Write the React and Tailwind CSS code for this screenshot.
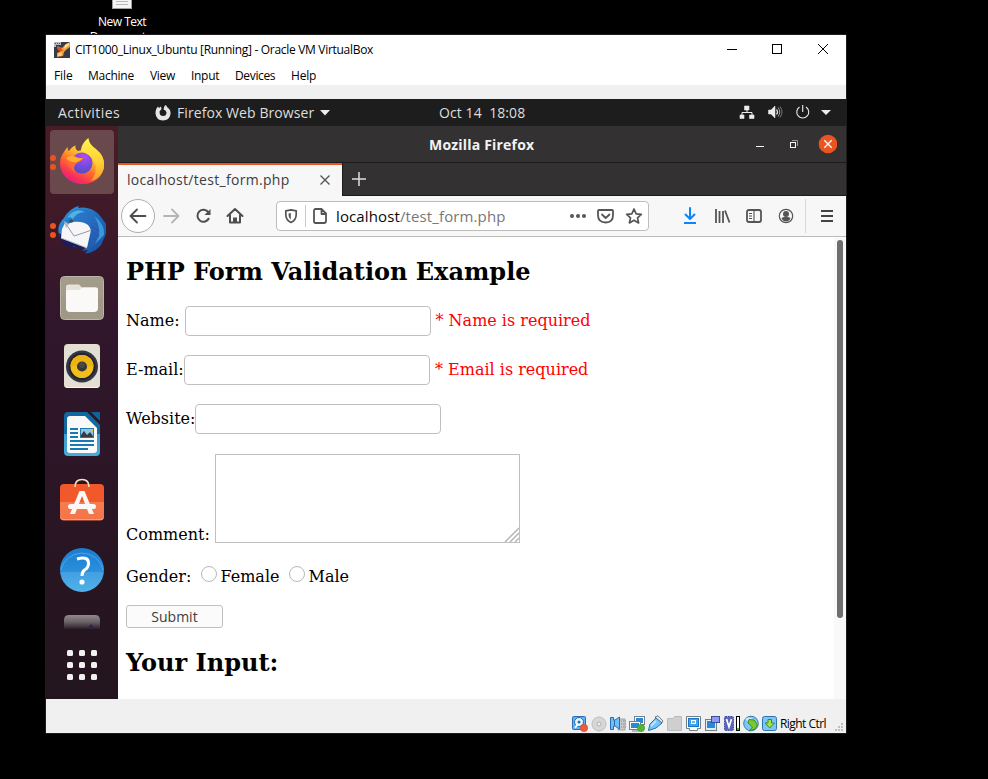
import React from "react";

const ui = "font-['Open_Sans','Noto_Sans',sans-serif]";

function FirefoxIcon() {
  return (
    <svg width="48" height="48" viewBox="0 0 48 48">
      <defs>
        <linearGradient id="ffBody" x1="0.85" y1="0.05" x2="0.25" y2="0.95">
          <stop offset="0" stopColor="#fff14a" />
          <stop offset="0.35" stopColor="#ffb52c" />
          <stop offset="0.6" stopColor="#ff6a2c" />
          <stop offset="0.85" stopColor="#f8305a" />
          <stop offset="1" stopColor="#e51f85" />
        </linearGradient>
        <radialGradient id="ffGlobe" cx="0.6" cy="0.2" r="0.9">
          <stop offset="0" stopColor="#b04df5" />
          <stop offset="0.6" stopColor="#6e4bd8" />
          <stop offset="1" stopColor="#4a4fb8" />
        </radialGradient>
        <linearGradient id="ffEar" x1="0.5" y1="0" x2="0.6" y2="1">
          <stop offset="0" stopColor="#fff34d" />
          <stop offset="0.6" stopColor="#ffce34" />
          <stop offset="1" stopColor="#ff9a2a" />
        </linearGradient>
      </defs>
      <path d="M6 14C7 12 8.500 10 9.500 9C9.500 11 10 12 11 13C13 10 15 8.500 17.500 7.500C17 10 18 12 20 13L30 10L41 14C45 18 46.500 23 46 28C45 39 36 46 24.500 46C12 46 2 37 2 25C2 21 3.500 17 6 14Z" fill="url(#ffBody)" />
      <circle cx="24" cy="25" r="10.500" fill="url(#ffGlobe)" />
      <path d="M23 13C23 7 27 2.500 30.500 0C31 5 34 8 38 11C44 16 46.500 22 46 29C45 36 40 41 33 43C38 37 39 30 36 24C34 18 28 15 23 13Z" fill="url(#ffEar)" />
      <path d="M8 19C12 17 17 18 20 20L25 20C24 23 20 24 18 26C16 28 15 31 18 34C13 33 9 27 8 19Z" fill="#ff6a35" />
      <path d="M8 20C12 17 17 18 20 20L25 20.500C24 22 20 23 18 24.500C14 24 10 23 8 20Z" fill="#ffb02a" />
    </svg>
  );
}

function ThunderbirdIcon() {
  return (
    <svg width="48" height="48" viewBox="0 0 48 48">
      <defs>
        <linearGradient id="tbBody" x1="0" y1="0" x2="1" y2="1">
          <stop offset="0" stopColor="#3ea2dd" />
          <stop offset="0.5" stopColor="#1d6bc0" />
          <stop offset="1" stopColor="#1b4fa0" />
        </linearGradient>
        <linearGradient id="tbHead" x1="0" y1="0" x2="1" y2="1">
          <stop offset="0" stopColor="#2a86d0" />
          <stop offset="0.6" stopColor="#2668bd" />
          <stop offset="1" stopColor="#2a55a8" />
        </linearGradient>
      </defs>
      <path d="M6 12C10 5 16 1 21 0L20 2C29 0 38 4 43 11L48 18L48 28L43 39C38 45 31 48 27 47L30 44L24 45L28 41C12 43 3 37 1 28C-1 22 2 16 6 12Z" fill="url(#tbBody)" />
      <path d="M1 27C2 37 9 42 16 43L15 40L22 43L30 41L10 33Z" fill="#1d1b5c" />
      <path d="M7 17L21 14C29 15 33 20 33 24L29 42L3 32L4 23Z" fill="#f6f6f8" />
      <path d="M8 18L16 30L34 24" fill="none" stroke="#8e8e98" strokeWidth="0.900" />
      <path d="M3 32L29 42" fill="none" stroke="#b9b9c2" strokeWidth="1" />
      <path d="M6 16C9 7 16 2 24 3C34 4 41 11 42 20C43 30 38 38 31 43C35 33 35 25 30 19C25 15 17 15 12 17L9 19Z" fill="url(#tbHead)" />
      <path d="M9 12C14 4 21 3 27 6C21 6 17 9 15 13C13 11 11 11 9 12Z" fill="#4fb4e3" />
      <path d="M36 10C40 16 42 22 41 30L37 38L46 29C47 21 42 14 36 10Z" fill="#3a97da" />
      <path d="M34 20L40 25M34 25L39 30M34 30L38 34" stroke="#1f55a8" strokeWidth="0.800" />
      <ellipse cx="13" cy="15" rx="2" ry="1.500" fill="#4a4a48" />
      <path d="M6 15L11 18L8 22Z" fill="#b4b9c1" />
    </svg>
  );
}

function FilesIcon() {
  return (
    <svg width="44" height="44" viewBox="0 0 44 44">
      <rect x="0.500" y="0.500" width="43" height="43" rx="4" fill="#9f9886" stroke="#bab5a6" />
      <rect x="1" y="1" width="42" height="21" rx="4" fill="#a39c8a" />
      <path d="M6 29V11Q6 8.500 8.500 8.500H19L22 11.500H36Q38 11.500 38 14V29Z" fill="#e6e2da" />
      <path d="M6 15Q6 14 7 14H18Q20 14 21 12.500Q22 11.500 23 11.500H36Q38 11.500 38 13.500V32Q38 36 34 36H10Q6 36 6 32Z" fill="#faf9f8" />
    </svg>
  );
}

function RhythmboxIcon() {
  return (
    <svg width="36" height="44" viewBox="0 0 36 44">
      <rect width="36" height="44" rx="4" fill="#e3dfd4" />
      <path d="M0 40Q0 44 4 44H32Q36 44 36 40V39Q36 43 32 43H4Q0 43 0 39Z" fill="#f8f7f2" />
      <circle cx="18" cy="22.500" r="16" fill="#343743" />
      <circle cx="18" cy="22.500" r="13.500" fill="#22242d" />
      <circle cx="18" cy="22.500" r="11.500" fill="#f2be1b" />
      <path d="M6.500 22.500A11.500 11.500 0 0 1 29.500 22.500Z" fill="#ebb413" />
      <circle cx="18" cy="22.500" r="5" fill="#363636" />
      <circle cx="18" cy="21" r="3" fill="#484848" />
    </svg>
  );
}

function WriterIcon() {
  return (
    <svg width="36" height="44" viewBox="0 0 36 44">
      <defs>
        <linearGradient id="wrBg" x1="0" y1="0" x2="0" y2="1">
          <stop offset="0.500" stopColor="#10699f" />
          <stop offset="0.500" stopColor="#3a9bce" />
          <stop offset="1" stopColor="#45acd9" />
        </linearGradient>
      </defs>
      <path d="M4 0H23L36 13V40Q36 44 32 44H4Q0 44 0 40V4Q0 0 4 0Z" fill="url(#wrBg)" />
      <path d="M27 0H35Q36 0 36 1V9Z" fill="#0e6498" />
      <path d="M6 4H21L33 16V38Q33 41 30 41H6Q3 41 3 38V7Q3 4 6 4Z" fill="#fafafa" />
      <path d="M6 17H14M6 21H14M6 25H14M6 29H30M6 33H30M6 37H24" stroke="#1778b5" strokeWidth="2" />
      <rect x="16" y="16" width="14" height="10" fill="#2678aa" />
      <rect x="17" y="17" width="12" height="8" fill="#8cc7e8" />
      <path d="M17 25V23L20 19L23 23L26 20L29 24V25Z" fill="#3a3a3a" />
      <path d="M26 17H29V20Z" fill="#f5c211" />
    </svg>
  );
}

function SoftwareIcon() {
  return (
    <svg className="mb-[4px]" width="44" height="44" viewBox="0 0 44 44">
      <defs>
        <linearGradient id="swBg" x1="0" y1="0" x2="0" y2="1">
          <stop offset="0.500" stopColor="#f1592a" />
          <stop offset="0.500" stopColor="#f57c51" />
          <stop offset="1" stopColor="#f37447" />
        </linearGradient>
      </defs>
      <rect x="0" y="6" width="44" height="36.500" rx="4" fill="url(#swBg)" />
      <path d="M0 38Q0 42 4 42H40Q44 42 44 38V37Q44 41 40 41H4Q0 41 0 37Z" fill="#f99a79" />
      <path d="M15 9Q15 1.500 22 1.500Q29 1.500 29 9" fill="none" stroke="#f2dfc0" strokeWidth="1.700" />
      <path d="M19.500 13H24.500L34 36H29L22 18L15 36H10Z" fill="#fdf8f5" />
      <rect x="8" y="26" width="28" height="5" rx="2.500" fill="#fdf8f5" />
    </svg>
  );
}

function HelpIcon() {
  return (
    <svg width="44" height="44" viewBox="0 0 44 44">
      <defs>
        <linearGradient id="hpBg" x1="0" y1="0" x2="0" y2="1">
          <stop offset="0" stopColor="#1b7cd0" />
          <stop offset="0.540" stopColor="#2a90dc" />
          <stop offset="0.540" stopColor="#439fe1" />
          <stop offset="1" stopColor="#50b2e9" />
        </linearGradient>
      </defs>
      <circle cx="22" cy="22" r="22" fill="url(#hpBg)" />
      <path d="M1 24A21.500 21.500 0 0 1 43 24" transform="translate(0 -2)" fill="none" stroke="#5fb4ee" strokeWidth="0.700" />
      <path d="M17 11Q29 7.500 28.500 16Q28.200 20 24.500 22Q22 24 22 28" fill="none" stroke="#fff" strokeWidth="3" />
      <circle cx="22" cy="34" r="2.600" fill="#fff" />
    </svg>
  );
}

function DockDots() {
  return (
    <div className="absolute top-[27px] left-[4px] flex flex-col gap-[3px]">
      <div className="size-[6px] rounded-full bg-[#e95420]" />
      <div className="size-[6px] rounded-full bg-[#e95420]" />
    </div>
  );
}

function DockItem({ running, active, children }) {
  return (
    <div className="relative flex h-[68px] w-full items-center justify-center">
      <div className={active ? "flex size-[64px] items-center justify-center rounded-[4px] bg-[#6a494d]" : "flex size-[64px] items-center justify-center"}>
        {children}
      </div>
      {running && <DockDots />}
    </div>
  );
}

function Dock() {
  return (
    <div className="flex w-[72px] flex-col items-center bg-linear-to-b from-[#4a1c25] via-[#31162c] via-35% to-[#23151d] pt-[2px]">
      <DockItem active running><FirefoxIcon /></DockItem>
      <DockItem running><ThunderbirdIcon /></DockItem>
      <DockItem><FilesIcon /></DockItem>
      <DockItem><RhythmboxIcon /></DockItem>
      <DockItem><WriterIcon /></DockItem>
      <DockItem><SoftwareIcon /></DockItem>
      <DockItem><HelpIcon /></DockItem>
      <svg className="mt-[11px]" width="36" height="14" viewBox="0 0 36 14">
        <defs>
          <linearGradient id="fade" x1="0" y1="0" x2="0" y2="1">
            <stop offset="0" stopColor="#8f898d" />
            <stop offset="0.500" stopColor="#6a6167" />
            <stop offset="1" stopColor="#2c1d28" />
          </linearGradient>
        </defs>
        <path d="M0 14V5Q0 0 5 0H31Q36 0 36 5V14Z" fill="url(#fade)" />
        <path d="M23 14L27 9L31 14Z" fill="#2b2447" />
      </svg>
      <div className="mt-[21px] grid grid-cols-3 gap-[6px]">
        {[0, 1, 2, 3, 4, 5, 6, 7, 8].map((n) => (
          <div key={n} className="size-[6px] rounded-[1.5px] bg-[#f2f1f0]" />
        ))}
      </div>
    </div>
  );
}

function VBoxLogo() {
  return (
    <svg width="16" height="16" viewBox="0 0 16 16">
      <rect width="16" height="16" fill="#3a3a46" />
      <path d="M3 4L8 6L12 2L16 0V5L12 8L10 10L9 14L3 15L3 11L7 9L4 8Z" fill="#f0a03a" />
      <path d="M3 4L7 6L9 9L7 9L4 8Z" fill="#e24a1c" />
      <path d="M11 3L15 1V3L10 7Z" fill="#fde3a0" />
      <path d="M4 12L8 10L7 14H4Z" fill="#fbd27c" />
      <path d="M0 0H7V3H2V5H0Z" fill="#b9bcc2" />
      <path d="M1 1.500H6" stroke="#555" strokeWidth="1" strokeDasharray="1 1" />
    </svg>
  );
}

function HostTitleBar() {
  return (
    <div className="flex h-[30px] items-center bg-white pl-[8px]">
      <VBoxLogo />
      <span className="ml-[5px] w-[330px] text-[12px] tracking-[-0.3px] whitespace-nowrap">CIT1000_Linux_Ubuntu [Running] - Oracle VM VirtualBox</span>
      <svg className="mr-[16px] mb-[2px] ml-auto" width="104" height="12" viewBox="0 0 104 12" fill="none" stroke="#000">
        <path d="M1 6.500H11" />
        <rect x="46.500" y="1.500" width="9" height="9" />
        <path d="M92 1L102 11M102 1L92 11" />
      </svg>
    </div>
  );
}

function HostMenu() {
  return (
    <div className="flex h-[20px] items-center bg-white pt-px pl-[8px] text-[12px] whitespace-nowrap">
      <span className="w-[34px] tracking-[-0.1px]">File</span>
      <span className="w-[62px] tracking-[-0.25px]">Machine</span>
      <span className="w-[41px] tracking-[-0.3px]">View</span>
      <span className="w-[44px] tracking-[-0.3px]">Input</span>
      <span className="w-[56px] tracking-[-0.35px]">Devices</span>
      <span className="tracking-[-0.2px]">Help</span>
    </div>
  );
}

function GnomeBar() {
  return (
    <div className="flex h-[27px] items-center bg-[#1d1d1d] text-[14px] whitespace-nowrap text-[#dedede]">
      <span className="ml-[12px] w-[97px] tracking-[0.45px]">Activities</span>
      <svg width="16" height="16" viewBox="0 0 16 16">
        <path d="M1.500 3.500L3 1.500L4 3L6 1.500L6.500 4L4.500 6.500Q4.500 11 8 11Q11.500 11 11.500 7.500Q11 5 8.500 4.500L9.500 1L11 0L12 2Q16 4.500 15.500 9Q14.500 15.500 8 15.500Q1 15 .500 8.500Q.500 5.500 1.500 3.500Z" fill="#e6e6e6" />
      </svg>
      <span className="ml-[6px] w-[138px] tracking-[0.08px]">Firefox Web Browser</span>
      <svg className="ml-[5px]" width="10" height="6" viewBox="0 0 10 6"><path d="M0 0H10L5 5.500Z" fill="#ececec" /></svg>
      <span className="ml-[109px] w-[90px] tracking-[0.08px] whitespace-pre">Oct 14  18:08</span>
      <svg className="mr-[14px] mb-[2px] ml-auto" width="93" height="16" viewBox="0 0 93 16" fill="none" stroke="#ececec">
        <path d="M5.500 2H10V6H5.500ZM1 11H5V14.500H1ZM10.500 11H15V14.500H10.500Z" fill="#ececec" strokeWidth="0.600" />
        <path d="M8 6V8.500M3 11V8.500H13V11" />
        <path d="M29.500 6H32L36 2V14L32 10H29.500Z" fill="#ececec" strokeWidth="0.500" />
        <path d="M37.500 5.500Q39.500 8 37.500 10.500" strokeWidth="1.200" />
        <path d="M39 3.500Q42.500 8 39 12.500" stroke="#aaa" />
        <path d="M41 2.500Q45 8 41 13.500" stroke="#777" />
        <path d="M60.500 3A6 6 0 1 0 67 3M63.700 1V8" strokeWidth="1.100" />
        <path d="M82 6H92L87 11Z" fill="#ececec" stroke="none" />
      </svg>
    </div>
  );
}

function BrowserTitle() {
  return (
    <div className="relative flex h-[37px] items-center justify-end border-b border-[#1c1b1b] bg-[#333132] pr-[9px]">
      <span className="absolute left-[311px] text-[14px] font-bold tracking-[0.2px] whitespace-nowrap text-[#f2f2f2]">Mozilla Firefox</span>
      <svg width="82" height="20" viewBox="0 0 82 20" fill="none" stroke="#f4f4f4">
        <path d="M1 12.500H9" />
        <rect x="35.500" y="8.500" width="5" height="5" />
        <path d="M37 6.500H42.500V12" stroke="#969696" />
        <circle cx="73" cy="10" r="9.300" fill="#e95420" stroke="none" />
        <path d="M69.300 6.300L76.700 13.700M76.700 6.300L69.300 13.700" strokeWidth="1.400" />
      </svg>
    </div>
  );
}

function Tabs() {
  return (
    <div className="flex h-[33px] bg-[#333132]">
      <div className="flex w-[224px] items-center border-t-[2px] border-[#e95420] bg-[#f7f7f7] pl-[9px] text-[14px] text-[#3d3d3d]">
        <span className="mb-[2px] w-[162px] tracking-[0.3px] whitespace-nowrap">localhost/test_form.php</span>
        <svg className="mb-[2px] ml-[30px]" width="12" height="12" viewBox="0 0 12 12"><path d="M1.500 1.500L10.500 10.500M10.500 1.500L1.500 10.500" stroke="#555" strokeWidth="1.400" /></svg>
      </div>
      <div className="flex flex-1 items-center border-b border-l border-[#1c1b1b] pl-[9px]">
        <svg width="14" height="14" viewBox="0 0 14 14"><path d="M7 0V14M0 7H14" stroke="#dedede" strokeWidth="1.500" /></svg>
      </div>
    </div>
  );
}

function Toolbar() {
  return (
    <div className="flex h-[41px] items-center border-b border-[#bcbcbc] bg-[#f7f7f7] pl-[3px]">
      <svg width="126" height="36" viewBox="0 0 126 36" fill="none" stroke="#4e4e4e" strokeWidth="2">
        <circle cx="17" cy="18" r="16.500" fill="#fff" stroke="#adadad" strokeWidth="1" />
        <path d="M24.500 18H10M16 11.500L9.500 18L16 24.500" strokeLinecap="round" strokeLinejoin="round" strokeWidth="1.800" />
        <path d="M43 18H57M51 11.500L57.500 18L51 24.500" stroke="#b5b5b5" strokeLinecap="round" strokeLinejoin="round" strokeWidth="1.800" />
        <path d="M87.500 14.500A6 6 0 1 0 88 20" />
        <path d="M89.500 11V17H83.500Z" fill="#4e4e4e" stroke="none" />
        <path d="M106.500 18L114 11L121.500 18M109 17V24.500H119V17" strokeLinejoin="round" strokeLinecap="round" />
        <path d="M112 25V19.500H116V25Z" fill="#4e4e4e" stroke="none" />
      </svg>
      <div className="ml-[29px] flex h-[30px] w-[373px] items-center rounded-[4px] border border-[#bdbdbd] bg-white">
        <svg width="52" height="28" viewBox="0 0 52 28" fill="none" stroke="#555">
          <path d="M8.800 8.800L14 7.800L19.200 8.800V12.500Q19.200 18 14 20.500Q8.800 18 8.800 12.500Z" strokeWidth="1.700" strokeLinejoin="round" />
          <path d="M13.800 11V17.500Q11.500 16 11.500 11.500Z" fill="#555" stroke="none" />
          <path d="M28.500 3V25" stroke="#c8c8c8" />
          <path d="M38.500 7H44.500L49 11.500V19Q49 21 47 21H38.500Q37 21 37 19V9Q37 7 38.500 7ZM44.500 7V12H49" strokeWidth="1.800" strokeLinejoin="round" />
        </svg>
        <span className="ml-[7px] w-[171px] text-[15px] tracking-[0.12px] whitespace-nowrap text-[#0a0a0a]">localhost<span className="text-[#777]">/test_form.php</span></span>
        <svg className="mr-[4px] ml-auto" width="76" height="18" viewBox="0 0 76 18" fill="none" stroke="#555" strokeWidth="1.800">
          <g fill="#555" stroke="none"><circle cx="4" cy="9" r="2" /><circle cx="10" cy="9" r="2" /><circle cx="16" cy="9" r="2" /></g>
          <path d="M31 3H44Q45 3 45 4V8Q45 15.500 37.800 15.500Q30 15.500 30 8V4Q30 3 31 3Z" />
          <path d="M34 7.500L37.700 11L41.500 7.500" strokeLinecap="round" strokeLinejoin="round" />
          <path d="M66 2L68.200 6.800L73.300 7.300L69.500 10.800L70.600 15.900L66 13.300L61.400 15.900L62.500 10.800L58.700 7.300L63.800 6.800Z" strokeWidth="1.700" strokeLinejoin="round" />
        </svg>
      </div>
      <svg className="ml-[32px]" width="160" height="34" viewBox="0 0 160 34" fill="none" stroke="#555" strokeWidth="1.800">
        <path d="M9 9V20M4.500 15.500L9 20L13.500 15.500" stroke="#0a84ff" strokeWidth="2" strokeLinecap="round" strokeLinejoin="round" />
        <path d="M3 24H15" stroke="#0a84ff" strokeWidth="2" />
        <path d="M35 10V24M38.500 12V24M42 12V24M44 11.500L48.500 23.500" />
        <rect x="66" y="11" width="14" height="12" rx="2" />
        <path d="M73 11V23M68 14.500H71M68 17H71M68 19.500H71" strokeWidth="1.100" />
        <circle cx="105" cy="17" r="6.700" strokeWidth="1.200" />
        <circle cx="105" cy="15" r="3" fill="#555" stroke="none" />
        <path d="M100.500 19Q105 16.500 109.500 19Q108.500 22.300 105 22.500Q101.500 22.300 100.500 19Z" fill="#555" stroke="none" />
        <path d="M124.500 0V34" stroke="#d8d8d8" strokeWidth="1" />
        <path d="M140 12H152M140 17H152M140 22H152" stroke="#444" />
      </svg>
    </div>
  );
}

function Field() {
  return <input className="h-[30px] w-[246px] rounded-[4px] border border-[#c0c0c0] bg-white" />;
}

function Page() {
  return (
    <div className="flex min-h-0 flex-1 overflow-hidden bg-white">
      <div className="flex flex-1 flex-col pt-[21px] pl-[8px] font-['DejaVu_Serif',serif] text-[16px] leading-[19px] text-black">
        <h2 className="h-[28px] text-[24px] leading-[28px] font-bold">PHP Form Validation Example</h2>
        <div className="mt-[20px] flex h-[30px] items-center">
          <span className="mb-[2px] w-[59px] whitespace-nowrap">Name:</span>
          <Field />
          <span className="mb-[2px] ml-[4.5px] text-[#ff0000]">* Name is required</span>
        </div>
        <div className="mt-[19px] flex h-[30px] items-center">
          <span className="mb-[2px] w-[58px] whitespace-nowrap">E-mail:</span>
          <Field />
          <span className="mb-[2px] ml-[5px] text-[#ff0000]">* Email is required</span>
        </div>
        <div className="mt-[19px] flex h-[30px] items-center">
          <span className="mb-[2px] w-[69px] whitespace-nowrap">Website:</span>
          <Field />
        </div>
        <div className="mt-[20px] flex h-[89px] items-end">
          <span className="w-[89px] leading-[17px] whitespace-nowrap">Comment:</span>
          <div className="flex h-[89px] w-[305px] items-end justify-end border border-[#c0c0c0]">
            <svg width="15" height="15" viewBox="0 0 15 15"><path d="M1 15L15 1M6 15L15 6M11 15L15 11" stroke="#b4b4b4" strokeWidth="1.500" /></svg>
          </div>
        </div>
        <div className="mt-[24px] flex h-[19px] items-center">
          <span className="w-[75px] whitespace-nowrap">Gender:</span>
          <span className="mb-[5px] size-[16px] rounded-full border border-[#b8b8b8] bg-white" />
          <span className="ml-[3.5px] w-[68.5px]">Female</span>
          <span className="mb-[5px] size-[16px] rounded-full border border-[#b8b8b8] bg-white" />
          <span className="ml-[3.5px]">Male</span>
        </div>
        <button className={`mt-[19px] h-[23px] w-[97px] rounded-[3px] border border-[#c0c0c0] bg-[#fbfbfb] text-[14px] leading-[20px] text-[#3d3d3d] ${ui}`}>Submit</button>
        <h2 className="mt-[21px] h-[28px] text-[24px] leading-[28px] font-bold">Your Input:</h2>
      </div>
      <div className="flex w-[12px] justify-center bg-[#f9f9f9] pt-[3px]">
        <div className="h-[378px] w-[6px] rounded-full bg-[#6e6e6e]" />
      </div>
    </div>
  );
}

function StatusIcons() {
  return (
    <svg width="206" height="18" viewBox="0 0 206 18" fill="none">
      <g>
        <rect x="0.500" y="1.500" width="13" height="13" rx="1" fill="#5ab4f0" stroke="#2b6cb5" />
        <circle cx="7" cy="7" r="4.500" fill="#e6f4fd" stroke="#236fae" />
        <circle cx="7" cy="7" r="1.500" fill="#236fae" />
        <path d="M3 13L6 9" stroke="#fff" strokeWidth="1.500" />
        <circle cx="12" cy="13" r="3.700" fill="#f05a3c" stroke="#cc4028" strokeWidth="0.500" />
      </g>
      <circle cx="27" cy="9" r="7" fill="#d7d7d7" stroke="#bdbdbd" />
      <circle cx="27" cy="9" r="2" fill="#eee" stroke="#b0b0b0" />
      <g>
        <path d="M47 4H53V15H46L46 13" fill="#c6c9cd" stroke="#a0a4aa" />
        <path d="M49 6H54M49 9H54M49 12H54" stroke="#888" strokeDasharray="1 1" />
        <path d="M38.500 2.500H41.500V5H43L47.500 2V14L43 11H41.500V14.500H38.500Z" fill="#6fc0f4" stroke="#2b6cb5" />
        <path d="M42.500 5V11" stroke="#2b6cb5" />
      </g>
      <g>
        <rect x="62.500" y="1.500" width="10" height="8" fill="#fff" stroke="#75818a" />
        <rect x="64" y="3" width="7" height="5" fill="#238bda" />
        <rect x="57.500" y="6.500" width="11" height="8" fill="#fff" stroke="#75818a" />
        <rect x="59" y="8" width="8" height="5" fill="#238bda" />
        <path d="M60 16H67" stroke="#75818a" />
        <circle cx="69" cy="13" r="3.700" fill="#55b42f" stroke="#3e9020" strokeWidth="0.500" />
      </g>
      <g>
        <path d="M83 2L86 .800L91 6L89 9Z" fill="#e8e8e8" stroke="#777" />
        <path d="M76.500 15.500L78 9L84 3L90 8L84 13Z" fill="#76c5f5" stroke="#2b6cb5" />
        <path d="M79 11L84 6" stroke="#c1e6fb" strokeWidth="2" />
      </g>
      <path d="M95.500 15.500V3.500H101L102.500 1.500H109.500V15.500Z" fill="#cfcfcf" stroke="#bcbcbc" />
      <g>
        <path d="M114.500 1.500H128.500V13.500H125.500V15.500H117.500V13.500H114.500Z" fill="#fff" stroke="#718087" />
        <rect x="116.500" y="3.500" width="10" height="8" fill="#3aa4ee" stroke="#1e74c2" />
        <rect x="119.500" y="5.500" width="4" height="3" fill="#5eb9f5" stroke="#fff" />
      </g>
      <g>
        <rect x="133.500" y="4.500" width="11" height="11" fill="#e7ecef" stroke="#718087" />
        <rect x="135" y="6" width="8" height="7" fill="#238bda" />
        <rect x="139.500" y="1.500" width="8" height="6" fill="#8a9fe8" stroke="#3c4aa5" />
      </g>
      <g>
        <rect x="152.500" y="1.500" width="9" height="14" rx="1" fill="#5964bd" stroke="#3e479c" strokeDasharray="1.500 1" />
        <path d="M154.500 4L157 12L159.500 4" stroke="#fff" strokeWidth="1.700" />
        <rect x="164.500" y="1.500" width="3" height="14" fill="#fff" stroke="#000" />
        <rect x="165" y="13" width="2" height="2" fill="#36c824" />
      </g>
      <g>
        <circle cx="179" cy="8.500" r="7.300" fill="#7cc8f2" stroke="#317cb4" />
        <path d="M173 4Q177 1 181 4L176 6Z" fill="#d2eefc" />
        <path d="M177 4.500L182 5L185.500 10L183 14L177 16L180.500 12L176 8Z" fill="#7bc92f" stroke="#438b18" />
      </g>
      <g>
        <rect x="190.500" y="1.500" width="14" height="14" rx="2" fill="#7ac7f5" stroke="#3074ad" />
        <path d="M196 4.500H199.500V8H202.500L197.700 13L193 8H196Z" fill="#a5e052" stroke="#438b18" />
      </g>
    </svg>
  );
}

function StatusBar() {
  return (
    <div className="relative flex h-[34px] items-end bg-[#f0f0f0]">
      <div className="ml-[526px] flex items-center">
        <StatusIcons />
        <span className="ml-[2px] text-[12px] tracking-[-0.55px] whitespace-nowrap">Right Ctrl</span>
      </div>
      <svg className="absolute right-[3px] bottom-[2px]" width="8" height="8" viewBox="0 0 8 8" fill="#bfbfbf">
        <path d="M6 0H8V2H6ZM3 3H5V5H3ZM6 3H8V5H6ZM0 6H2V8H0ZM3 6H5V8H3ZM6 6H8V8H6Z" />
      </svg>
    </div>
  );
}

export default function App() {
  return (
    <div className={`relative h-[779px] w-[988px] overflow-hidden bg-black text-black ${ui}`}>
      <div className="absolute top-0 left-[82px] flex h-[34px] w-[80px] flex-col items-center overflow-hidden text-[12px] leading-[16px] text-white">
        <svg className="shrink-0" width="20" height="9" viewBox="0 0 20 9">
          <path d="M0 0H20V9H0Z" fill="#a0a0a0" />
          <path d="M1 0H19V8H1Z" fill="#f4f4f4" />
          <path d="M4 1.500H16M4 4.500H16" stroke="#b9b9b9" />
        </svg>
        <span className="mt-[5px] tracking-[-0.5px]">New Text</span>
        <span className="-mt-px tracking-[-0.3px] whitespace-nowrap">Document...</span>
      </div>
      <div className="absolute top-[34px] left-[45px] flex h-[700px] w-[802px] flex-col border border-[#1c1c1c] bg-white">
        <HostTitleBar />
        <HostMenu />
        <div className="h-[14px] bg-[#f0f0f0]" />
        <GnomeBar />
        <div className="flex h-[573px]">
          <Dock />
          <div className="flex flex-1 flex-col">
            <BrowserTitle />
            <Tabs />
            <Toolbar />
            <Page />
          </div>
        </div>
        <StatusBar />
      </div>
    </div>
  );
}
